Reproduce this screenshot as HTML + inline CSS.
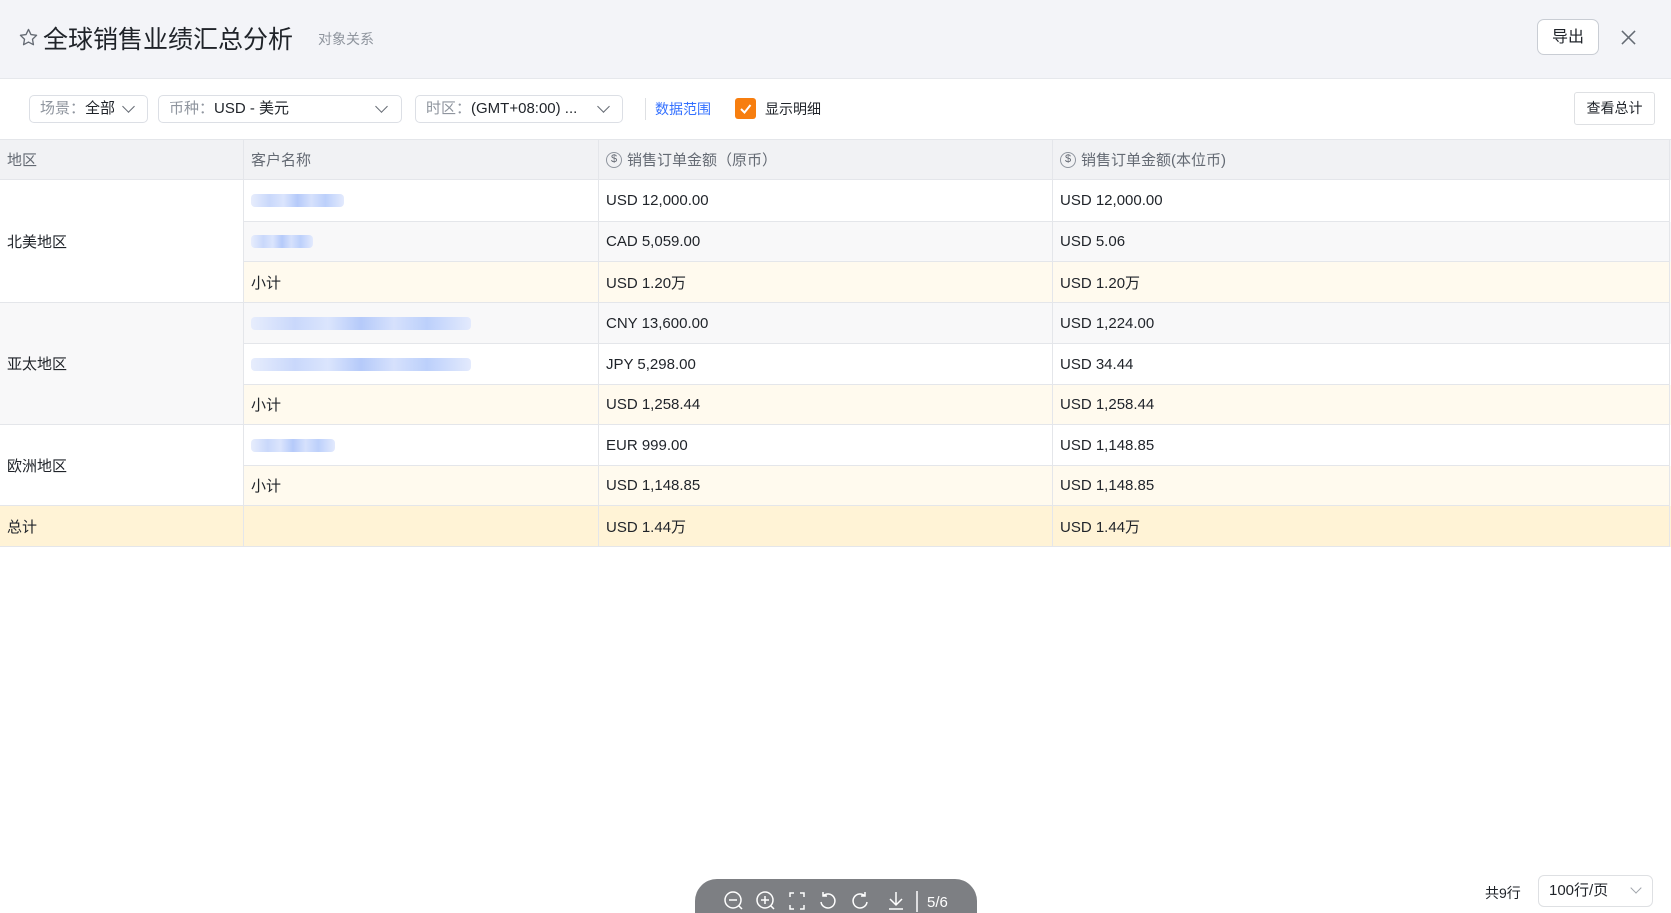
<!DOCTYPE html>
<html><head><meta charset="utf-8"><style>
*{box-sizing:border-box;margin:0;padding:0}
html,body{width:1671px;height:913px;overflow:hidden}
body{background:#fff;font-family:"Liberation Sans","Noto Sans CJK SC",sans-serif;color:#1f2329;position:relative}
.a{position:absolute}
.hdr{left:0;top:0;width:1671px;height:79px;background:#f3f4f8;border-bottom:1px solid #e6e8ec}
.sel{position:absolute;top:95px;height:28px;border:1px solid #dcdfe5;border-radius:5px;font-size:15px;line-height:26px;padding-left:10px;color:#1f2329}
.sel .l{color:#8f959e}
.chev{position:absolute;top:8px;width:9px;height:9px;border-right:1.5px solid #646a73;border-bottom:1.5px solid #646a73;transform:rotate(45deg)}
.row{position:absolute;left:0;width:1671px;font-size:15px}
.c{position:absolute;top:0;height:100%;border-right:1px solid #e4e6ea;border-bottom:1px solid #e4e6ea;padding-left:7px;display:flex;align-items:center}
.blur{height:13px;border-radius:4px;background:linear-gradient(90deg,#e7edfc,#c9d8fb 20%,#dbe5fd 35%,#b5cafa 50%,#d6e1fc 65%,#bcd0fb 80%,#e3eafd)}
</style></head><body>
<div class="a hdr"></div>
<svg class="a" style="left:19px;top:28px" width="19" height="19" viewBox="0 0 20 20"><path d="M10 1.5l2.6 5.4 5.9.8-4.3 4.1 1 5.8L10 14.8l-5.2 2.8 1-5.8L1.5 7.7l5.9-.8z" fill="none" stroke="#646a73" stroke-width="1.4" stroke-linejoin="round"/></svg>
<div class="a" style="left:43px;top:20px;font-size:25px;color:#1f2329">全球销售业绩汇总分析</div>
<div class="a" style="left:318px;top:29px;font-size:14px;color:#8f959e">对象关系</div>
<div class="a" style="left:1537px;top:19px;width:62px;height:36px;border:1px solid #c9cdd4;border-radius:7px;background:#fff;font-size:16px;text-align:center;line-height:36px">导出</div>
<svg class="a" style="left:1621px;top:30px" width="15" height="15" viewBox="0 0 16 16"><path d="M1 1L15 15M15 1L1 15" stroke="#646a73" stroke-width="1.6"/></svg>

<div class="sel" style="left:29px;width:119px"><span class="l">场景：</span>全部<span class="chev" style="left:94px;top:6px"></span></div>
<div class="sel" style="left:158px;width:244px"><span class="l">币种：</span>USD - 美元<span class="chev" style="left:218px;top:6px"></span></div>
<div class="sel" style="left:415px;width:208px"><span class="l">时区：</span>(GMT+08:00) ...<span class="chev" style="left:183px;top:6px"></span></div>
<div class="a" style="left:645px;top:98px;width:1px;height:22px;background:#dee0e3"></div>
<div class="a" style="left:655px;top:99px;font-size:14px;color:#3370ff">数据范围</div>
<div class="a" style="left:735px;top:98px;width:21px;height:21px;background:#f77e0f;border-radius:3px"><svg width="21" height="21" viewBox="0 0 21 21"><path d="M6 11L9.5 14.5L15.5 7" stroke="#fff" stroke-width="2" fill="none"/></svg></div>
<div class="a" style="left:765px;top:99px;font-size:14px">显示明细</div>
<div class="a" style="left:1574px;top:92px;width:81px;height:33px;border:1px solid #dee0e3;border-radius:3px;font-size:14px;text-align:center;line-height:31px">查看总计</div>

<div class="row" style="top:139px;height:41px;background:#f1f2f4;color:#646a73;border-top:1px solid #e4e6ea">
<div class="c" style="left:0;width:244px">地区</div>
<div class="c" style="left:244px;width:355px">客户名称</div>
<div class="c" style="left:599px;width:454px"><span style="display:inline-block;width:16px;height:16px;border:1.4px solid #8f959e;border-radius:50%;font-size:11px;line-height:13px;text-align:center;margin-right:5px">$</span>销售订单金额（原币）</div>
<div class="c" style="left:1053px;width:617px"><span style="display:inline-block;width:16px;height:16px;border:1.4px solid #8f959e;border-radius:50%;font-size:11px;line-height:13px;text-align:center;margin-right:5px">$</span>销售订单金额(本位币)</div>
</div>

<div class="row" style="top:180px;height:123px"><div class="c" style="left:0;width:244px;background:#fff">北美地区</div></div>
<div class="row" style="top:303px;height:122px"><div class="c" style="left:0;width:244px;background:#f8f8f9">亚太地区</div></div>
<div class="row" style="top:425px;height:81px"><div class="c" style="left:0;width:244px;background:#fff">欧洲地区</div></div>

<div class="row" style="top:180px;height:42px;left:244px;width:1427px;background:#fff">
<div class="c" style="left:0;width:355px"><div class="blur" style="width:93px"></div></div>
<div class="c" style="left:355px;width:454px">USD 12,000.00</div><div class="c" style="left:809px;width:617px">USD 12,000.00</div></div>
<div class="row" style="top:222px;height:40px;left:244px;width:1427px;background:#f8f8f9">
<div class="c" style="left:0;width:355px"><div class="blur" style="width:62px"></div></div>
<div class="c" style="left:355px;width:454px">CAD 5,059.00</div><div class="c" style="left:809px;width:617px">USD 5.06</div></div>
<div class="row" style="top:262px;height:41px;left:244px;width:1427px;background:#fffaee">
<div class="c" style="left:0;width:355px">小计</div>
<div class="c" style="left:355px;width:454px">USD 1.20万</div><div class="c" style="left:809px;width:617px">USD 1.20万</div></div>
<div class="row" style="top:303px;height:41px;left:244px;width:1427px;background:#f8f8f9">
<div class="c" style="left:0;width:355px"><div class="blur" style="width:220px"></div></div>
<div class="c" style="left:355px;width:454px">CNY 13,600.00</div><div class="c" style="left:809px;width:617px">USD 1,224.00</div></div>
<div class="row" style="top:344px;height:41px;left:244px;width:1427px;background:#fff">
<div class="c" style="left:0;width:355px"><div class="blur" style="width:220px"></div></div>
<div class="c" style="left:355px;width:454px">JPY 5,298.00</div><div class="c" style="left:809px;width:617px">USD 34.44</div></div>
<div class="row" style="top:385px;height:40px;left:244px;width:1427px;background:#fffaee">
<div class="c" style="left:0;width:355px">小计</div>
<div class="c" style="left:355px;width:454px">USD 1,258.44</div><div class="c" style="left:809px;width:617px">USD 1,258.44</div></div>
<div class="row" style="top:425px;height:41px;left:244px;width:1427px;background:#fff">
<div class="c" style="left:0;width:355px"><div class="blur" style="width:84px"></div></div>
<div class="c" style="left:355px;width:454px">EUR 999.00</div><div class="c" style="left:809px;width:617px">USD 1,148.85</div></div>
<div class="row" style="top:466px;height:40px;left:244px;width:1427px;background:#fffaee">
<div class="c" style="left:0;width:355px">小计</div>
<div class="c" style="left:355px;width:454px">USD 1,148.85</div><div class="c" style="left:809px;width:617px">USD 1,148.85</div></div>
<div class="row" style="top:506px;height:41px;background:#fff3d6">
<div class="c" style="left:0;width:244px">总计</div><div class="c" style="left:244px;width:355px"></div>
<div class="c" style="left:599px;width:454px">USD 1.44万</div><div class="c" style="left:1053px;width:617px">USD 1.44万</div></div>

<div class="a" style="left:695px;top:879px;width:282px;height:34px;border-radius:22px 22px 0 0;background:#7d7f83"></div>
<svg class="a" style="left:720px;top:889px" width="230" height="24" viewBox="0 0 230 24" fill="none" stroke="#fff" stroke-width="1.5">
<circle cx="13" cy="11" r="8"/><path d="M9 11h8M19 17l3 3"/>
<circle cx="45" cy="11" r="8"/><path d="M41 11h8M45 7v8M51 17l3 3"/>
<path d="M70 8V4h4M80 4h4v4M84 16v4h-4M74 20h-4v-4"/>
<path d="M103 7a7 7 0 1 1-2 6M103 3v4h4"/>
<path d="M145 7a7 7 0 1 0 2 6M145 3v4h-4"/>
<path d="M176 3v13M170 10l6 6 6-6M169 20h14"/>
<path d="M197 2v21"/>
<text x="207" y="18" fill="#fff" stroke="none" font-size="15" font-family="Liberation Sans">5/6</text>
</svg>
<div class="a" style="left:1485px;top:883px;font-size:14px">共9行</div>
<div class="a" style="left:1538px;top:875px;width:115px;height:32px;border:1px solid #dee0e3;border-radius:6px;font-size:15px;line-height:30px;padding-left:10px">100行/页<span class="chev" style="left:93px;top:8px;border-color:#a0a4ab;width:8px;height:8px"></span></div>
</body></html>
